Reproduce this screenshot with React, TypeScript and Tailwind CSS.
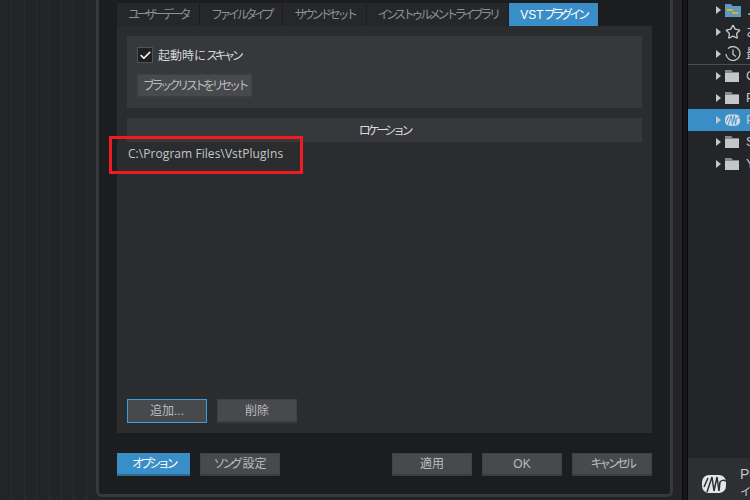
import React from 'react';
import { Check, Star } from 'lucide-react';

const jp = 'font-["Liberation_Sans","Noto_Sans_CJK_JP",sans-serif]';
// katakana in the reference is set much narrower than the CJK font's full width
const kana = 'tracking-[-3.4px]';

const tabs = [
  { label: 'ユーザーデータ', w: 'w-[82px]' },
  { label: 'ファイルタイプ', w: 'w-[82px]' },
  { label: 'サウンドセット', w: 'w-[83px]' },
  { label: 'インストゥルメントライブラリ', w: 'w-[141px]' },
];

function Folder() {
  return (
    <svg width="15" height="12" viewBox="0 0 15 12" className="shrink-0">
      <path d="M0 0h6l1.5 2H14v10H0z" fill="#c4c7ca" />
      <path d="M0 0h6l1.5 2H14v1H0z" fill="#85888c" />
    </svg>
  );
}

function ColorFolder() {
  return (
    <svg width="16" height="13" viewBox="0 0 16 13" className="shrink-0">
      <path d="M0 0h6l1.5 2H16v11H0z" fill="#5a9cc0" />
      <rect x="2" y="5" width="6" height="2" fill="#f2a81d" />
      <rect x="7" y="8" width="6" height="2" fill="#f2a81d" />
    </svg>
  );
}

function Clock() {
  return (
    <svg width="16" height="16" viewBox="0 0 16 16" fill="none" stroke="#c4c7ca" strokeWidth="1.3" className="shrink-0">
      <path d="M3 2.6A7 7 0 1 1 1 8" />
      <path d="M8 3.5V8.5L11 10.5" />
    </svg>
  );
}

function Logo({ className, fill, stripe }: { className: string; fill: string; stripe: string }) {
  return (
    <svg viewBox="0 0 24 18" className={className}>
      <rect width="24" height="18" rx="7" fill={fill} />
      <path
        d="M2 12L6 3M5 17L10 2l2 14 3-14 2 14 1-9c1-2 4-2 6-1"
        stroke={stripe}
        strokeWidth="1.5"
        fill="none"
      />
    </svg>
  );
}

function Btn({
  children,
  w = 'w-20',
  h = 'h-6',
  primary,
  focus,
}: {
  children: React.ReactNode;
  w?: string;
  h?: string;
  primary?: boolean;
  focus?: boolean;
}) {
  const look = primary
    ? 'bg-[#3a8ec8] border-b-2 border-[#2a6a96] text-white'
    : focus
      ? 'bg-[#47494c] border border-[#3d9be0] text-[#b9bcbf]'
      : 'bg-[#47494c] border border-[#3f4144] border-b-2 border-b-[#3a3c3f] text-[#b9bcbf]';
  return <div className={`${w} ${h} flex items-center justify-center text-xs whitespace-nowrap ${look}`}>{children}</div>;
}

function Row({ icon, text, active, line }: { icon: React.ReactNode; text: string; active?: boolean; line?: boolean }) {
  return (
    <div className={`h-[22px] shrink-0 flex items-center pl-[28px] overflow-hidden ${active ? 'bg-[#3a8ec8]' : ''} ${line ? 'border-b border-[#4a4c4f]' : ''}`}>
      <div className="w-0 h-0 border-y-4 border-y-transparent border-l-[5px] border-l-[#c4c7ca] mr-1 shrink-0" />
      <div className="w-4 flex justify-start shrink-0">{icon}</div>
      <span className="ml-[5px] text-[13px] text-[#c4c7ca] whitespace-nowrap">{text}</span>
    </div>
  );
}

export default function App() {
  return (
    <div className={`w-[750px] h-[500px] flex overflow-hidden bg-[#222426] ${jp}`}>
      {/* background tracks */}
      <div className="w-[96px] flex shrink-0">
        {[0, 1, 2, 3, 4, 5, 6].map((i) => (
          <div key={i} className="w-[12.4px] border-r border-[#2b2d2f]" />
        ))}
      </div>

      {/* dialog */}
      <div className="w-[577px] h-[497px] shrink-0 bg-[#1c1d1f] border-[3px] border-t-0 border-[#37393c] rounded-b-md flex flex-col px-[18px] pt-[3px]">
        <div className="flex gap-px h-[23px]">
          {tabs.map((t) => (
            <div key={t.label} className={`${t.w} flex items-center justify-center bg-[#25272a] text-xs text-[#8e9194] whitespace-nowrap ${kana}`}>
              {t.label}
            </div>
          ))}
          <div className="w-[89px] flex items-center justify-center bg-[#3a8ec8] text-xs text-white whitespace-nowrap">
            VST<span className={kana}>プラグイン</span>
          </div>
        </div>

        <div className="relative h-[407px] bg-[#2b2c2e] p-[10px] flex flex-col">
          <div className="h-[72px] bg-[#37383c] px-[10px] pt-[11px] flex flex-col gap-[11px]">
            <div className="flex items-center gap-[5px] h-4">
              <div className="w-4 h-4 flex items-center justify-center bg-[#1f2022] border border-[#505255]">
                <Check size={13} strokeWidth={3} className="text-white" />
              </div>
              <span className="text-xs text-[#d4d6d8] pt-px">
                起動時に<span className={kana}>スキャン</span>
              </span>
            </div>
            <Btn w="w-[115px]">
              <span className={kana}>ブラックリストをリセット</span>
            </Btn>
          </div>

          <div className={`mt-[10px] h-6 bg-[#37383c] flex items-center justify-center text-xs text-[#d8dadc] pt-px ${kana}`}>ロケーション</div>
          <div className="pl-px pt-[3px] h-5 flex items-center font-['Open_Sans',sans-serif] text-xs tracking-[0.06px] text-[#c4c7ca] whitespace-nowrap">
            C:\Program Files\VstPlugIns
          </div>

          <div className="mt-auto flex gap-[10px]">
            <Btn focus>追加...</Btn>
            <Btn>削除</Btn>
          </div>

          {/* red annotation from the screenshot */}
          <div className="absolute left-[-8px] top-[110px] w-[194px] h-[38px] border-[3px] border-[#ed1c24]" />
        </div>

        <div className="flex items-center gap-[10px] mt-5">
          <Btn w="w-[73px]" h="h-[23px]" primary>
            <span className={kana}>オプション</span>
          </Btn>
          <Btn h="h-[23px]">
            <span className={kana}>ソング</span>
            <span className="pl-[3px]">設定</span>
          </Btn>
          <div className="flex-1" />
          <Btn h="h-[23px]">適用</Btn>
          <Btn h="h-[23px]">OK</Btn>
          <Btn h="h-[23px]">
            <span className={kana}>キャンセル</span>
          </Btn>
        </div>
      </div>

      {/* splitter between dialog backdrop and browser panel */}
      <div className="w-[15px] shrink-0 flex">
        <div className="w-[9px]" />
        <div className="w-[6px] bg-[#161718] border-x border-[#0b0b0c]" />
      </div>

      {/* browser panel */}
      <div className="flex-1 min-w-0 flex flex-col bg-[#232528] overflow-hidden">
        <div className="mt-[-1px]" />
        <Row icon={<ColorFolder />} text="ノート" />
        <Row icon={<Star size={16} className="text-[#c4c7ca]" />} text="お気に入り" />
        <Row icon={<Clock />} text="最近" line />
        <Row icon={<Folder />} text="Cubase" />
        <Row icon={<Folder />} text="Program" />
        <Row icon={<Logo className="w-[15px] h-[12px]" fill="#d3dbe1" stripe="#3a8ec8" />} text="PreSonus" active />
        <Row icon={<Folder />} text="Steinberg" />
        <Row icon={<Folder />} text="Yamaha" />
        <div className="mt-auto h-[42px] shrink-0 bg-[#2d2f32] flex items-center pl-[14px]">
          <Logo className="w-6 h-[18px] shrink-0 mt-[10px]" fill="#e4e5e6" stripe="#2d2f32" />
          <div className="ml-[14px] mt-[7px] text-[14px] leading-[18px] text-[#c4c7ca] whitespace-nowrap">
            <div>PreSonus</div>
            <div className="text-[11px]">インストゥルメント</div>
          </div>
        </div>
      </div>
    </div>
  );
}
